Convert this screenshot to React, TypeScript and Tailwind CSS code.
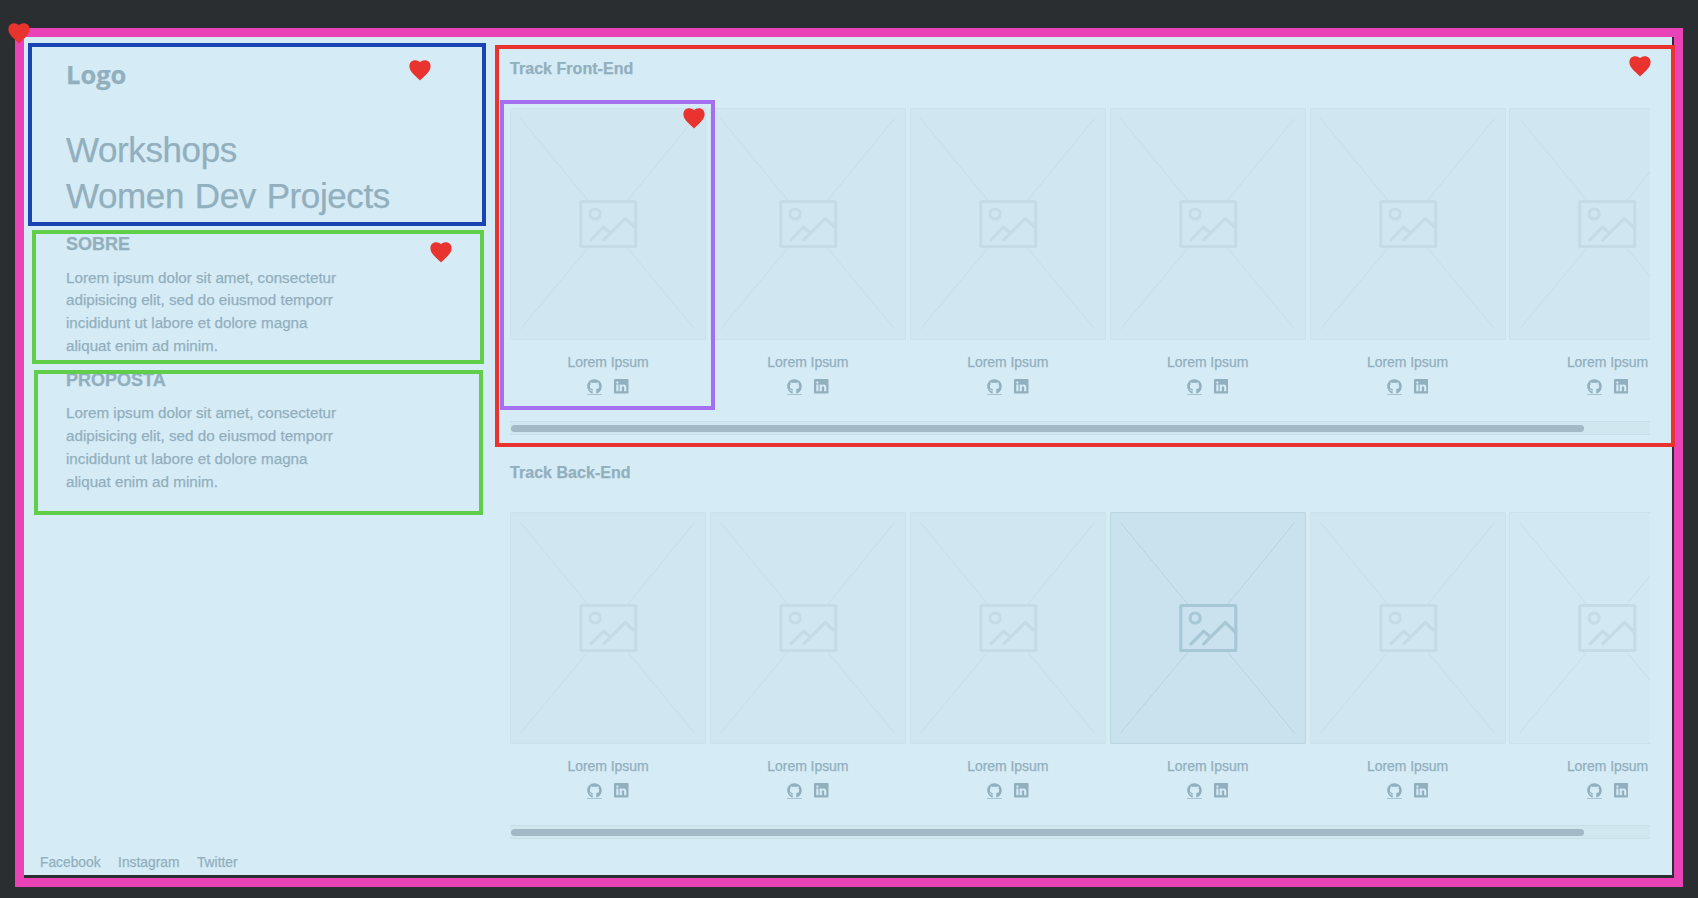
import React from "react";
import { FaGithub } from "react-icons/fa";
import { BsLinkedin } from "react-icons/bs";

function Heart({ className }: { className: string }) {
  return (
    <svg viewBox="0 0 22 20.5" className={"absolute z-20 h-[20.5px] w-[22px] fill-[#e8332e] " + className}>
      <path d="M11 20.4C10 19.4 8.300 18 5.500 15.200C2.300 12 .4 9.700 .4 6.300C.4 2.600 2.800 .3 6.200 .3C8.200 .3 10 1.100 11 2.300C12 1.100 13.800 .3 15.800 .3C19.200 .3 21.600 2.600 21.600 6.300C21.600 9.700 19.700 12 16.500 15.200C13.700 18 12 19.400 11 20.400Z" />
    </svg>
  );
}

const tones = {
  normal: "border-[#cbe1eb] bg-[#d0e6f0] [--ln:#c8dfe9] [--ic:#c5dce7]",
  strong: "border-[#b9d5e0] bg-[#cae2ee] [--ln:#b8d3df] [--ic:#a8c7d5]",
  light: "border-[#cbe2ec] bg-[#d2e9f3] [--ln:#c8dfe9] [--ic:#c5dce7]",
};

function Card({ tone }: { tone: keyof typeof tones }) {
  return (
    <article className="flex w-[196px] shrink-0 flex-col items-center">
      <div className={"h-[231.5px] w-full rounded-[1px] border " + tones[tone]}>
        <svg viewBox="0 0 194 229.5" className="h-full w-full" fill="none">
          <path d="M9.500 9.500L76.500 91M117 91L183.500 9.500M9.500 220L76.500 139.500M117 139.500L183.500 220" stroke="var(--ln)" />
          <g stroke="var(--ic)" strokeWidth="3.2" strokeLinecap="round" strokeLinejoin="round">
            <rect x="69.800" y="92.500" width="55" height="45" rx="1" />
            <circle cx="84.100" cy="105" r="5" />
            <path d="M80 130.800L92.700 118.200L99 123.800M92.700 130.800L114.300 109.500L124.300 119" />
          </g>
        </svg>
      </div>
      <h3 className="mt-[12.500px] text-[14px] leading-5 tracking-[-0.05px]">Lorem Ipsum</h3>
      <div className="mt-[7px] flex gap-3">
        <div className="h-[16px] w-[15px] border-b border-[#a9c3d0]">
          <FaGithub className="h-[15px] w-[15px]" />
        </div>
        <BsLinkedin className="h-[14.500px] w-[14.500px]" />
      </div>
    </article>
  );
}

function Track({ title, cards }: { title: string; cards: (keyof typeof tones)[] }) {
  return (
    <>
      <h2 className="h-[50px] pt-px text-[16px] font-bold leading-[20px] tracking-[0.04px]">{title}</h2>
      <div className="flex w-[1140px] gap-[3.900px] overflow-hidden">
        {cards.map((tone, i) => (
          <Card key={i} tone={tone} />
        ))}
      </div>
      <div className="mt-[25.500px] h-[14px] w-[1140px] border-y border-[#c8dfe9] bg-[#d1e7f0] px-px pt-[3px]">
        <div className="h-[7px] w-[1073px] rounded-full bg-[#a3b9c5]" />
      </div>
    </>
  );
}

function Lorem() {
  return (
    <p className="text-[15.200px] leading-[22.800px]">
      Lorem ipsum dolor sit amet, consectetur
      <br />
      adipisicing elit, sed do eiusmod temporr
      <br />
      incididunt ut labore et dolore magna
      <br />
      aliquat enim ad minim.
    </p>
  );
}

export default function App() {
  return (
    <div className="h-[898px] w-[1698px] overflow-hidden bg-[#2b2e31] pl-[15px] pt-[28px] font-['Liberation_Sans',Arial,sans-serif] text-[#92afbe] [-webkit-text-stroke:0.25px_#92afbe]">
      <div className="relative h-[859px] w-[1668px] border-[9px] border-[#e943b7]">
        <Heart className="-left-[16px] -top-[14px]" />
        <main className="flex h-[838px] w-[1648px] bg-[#d5ebf5]">
          <aside className="flex w-[471px] shrink-0 flex-col">
            <header className="relative ml-1 mt-[6px] h-[183px] w-[458px] border-4 border-[#1a44b3] pl-[34px] pt-[11px]">
              <Heart className="left-[377px] top-[13px]" />
              <div className="h-[63px] font-['Open_Sans',sans-serif] text-[25.500px] font-bold leading-[32px]">Logo</div>
              <h1 className="mt-[6px] text-[35px] leading-[46px] tracking-[-0.4px] [word-spacing:1.500px]">
                Workshops
                <br />
                Women Dev Projects
              </h1>
            </header>
            <section className="relative ml-2 mt-[4px] h-[134px] w-[452px] border-4 border-[#60ce48] pl-[30px] pt-px">
              <Heart className="left-[394px] top-[8px]" />
              <h2 className="h-[31.500px] text-[18px] font-bold leading-[19px]">SOBRE</h2>
              <Lorem />
            </section>
            <section className="ml-[10px] mt-[6px] h-[145px] w-[449px] overflow-hidden border-4 border-[#60ce48] pl-[28px]">
              <h2 className="-mt-[3px] h-[31.300px] text-[18px] font-bold leading-[19px]">PROPOSTA</h2>
              <Lorem />
            </section>
            <footer className="mb-[2px] ml-4 mt-auto flex gap-[17.500px] text-[13.800px] leading-5">
              <a>Facebook</a>
              <a>Instagram</a>
              <a>Twitter</a>
            </footer>
          </aside>
          <div className="flex w-[1180px] shrink-0 flex-col pt-[8px]">
            <section className="relative z-10 h-[402px] w-[1180px] border-4 border-[#e8332e] pl-[11px] pt-[9px]">
              <Heart className="left-[1130px] top-[7px]" />
              <div className="pointer-events-none absolute left-px top-[51px] z-10 h-[310px] w-[215px] border-4 border-[#a470ef]">
                <Heart className="right-[6px] top-[4px]" />
              </div>
              <Track title="Track Front-End" cards={["normal", "normal", "normal", "normal", "normal", "normal"]} />
            </section>
            <section className="pl-[15px] pt-[15px]">
              <Track title="Track Back-End" cards={["normal", "normal", "normal", "strong", "normal", "light"]} />
            </section>
          </div>
        </main>
      </div>
    </div>
  );
}
